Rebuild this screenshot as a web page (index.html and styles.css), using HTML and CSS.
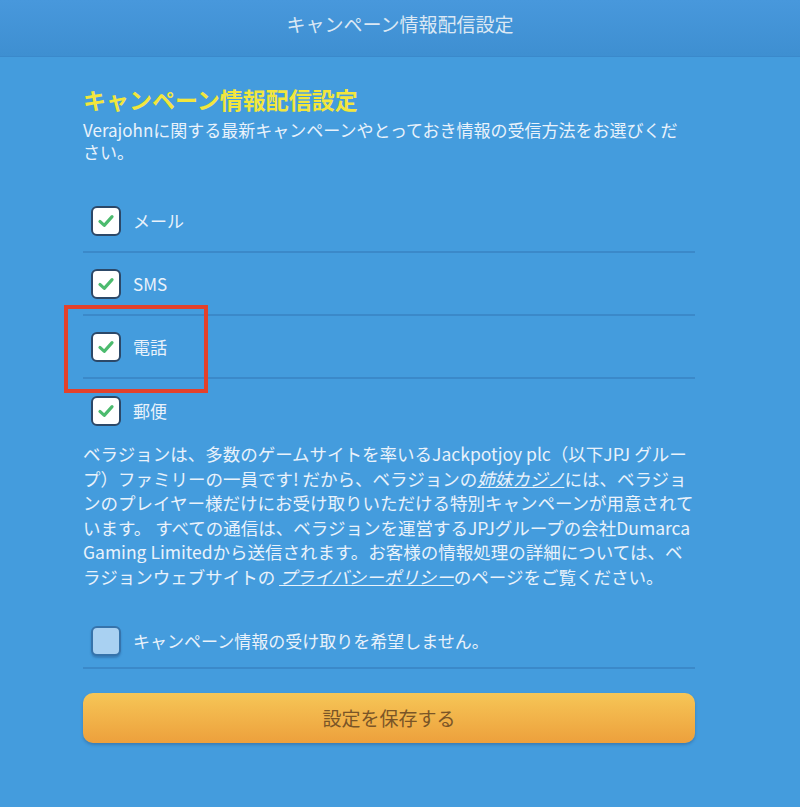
FILE: index.html
```html
<!DOCTYPE html>
<html lang="ja">
<head>
  <meta charset="UTF-8" />
  <meta name="viewport" content="width=device-width, initial-scale=1" />
  <title>キャンペーン情報配信設定</title>
  <link rel="stylesheet" href="styles.css">
</head>
<body>

  <div class="page-header">キャンペーン情報配信設定</div>

  <div class="content">
    <h1 class="title">キャンペーン情報配信設定</h1>
    <p class="lead">Verajohnに関する最新キャンペーンやとっておき情報の受信方法をお選びください。</p>

    <div class="options">
      <label class="option">
        <span class="box checked">
          <svg viewBox="0 0 30 30"><path d="M8 15.5 L13 20 L22 10"/></svg>
        </span>
        <span class="label">メール</span>
      </label>
      <label class="option">
        <span class="box checked">
          <svg viewBox="0 0 30 30"><path d="M8 15.5 L13 20 L22 10"/></svg>
        </span>
        <span class="label">SMS</span>
      </label>
      <label class="option marked">
        <span class="box checked">
          <svg viewBox="0 0 30 30"><path d="M8 15.5 L13 20 L22 10"/></svg>
        </span>
        <span class="label">電話</span>
        <span class="highlight"></span>
      </label>
      <label class="option">
        <span class="box checked">
          <svg viewBox="0 0 30 30"><path d="M8 15.5 L13 20 L22 10"/></svg>
        </span>
        <span class="label">郵便</span>
      </label>
    </div>

    <p class="note">ベラジョンは、多数のゲームサイトを率いるJackpotjoy plc（以下JPJ グループ）ファミリーの一員です! だから、ベラジョンの<a href="#">姉妹カジノ</a>には、ベラジョンのプレイヤー様だけにお受け取りいただける特別キャンペーンが用意されています。 すべての通信は、ベラジョンを運営するJPJグループの会社Dumarca Gaming Limitedから送信されます。お客様の情報処理の詳細については、ベラジョンウェブサイトの <a href="#">プライバシーポリシー</a>のページをご覧ください。</p>

    <label class="option opt-out">
      <span class="box empty"></span>
      <span class="label">キャンペーン情報の受け取りを希望しません。</span>
    </label>

    <button class="save-btn">設定を保存する</button>
  </div>

</body>
</html>
```

FILE: styles.css
```css
body {
  margin: 0;
  background-color: #449cdd;
  font-family: "Noto Sans CJK JP", "Noto Sans", sans-serif;
  color: #e9f2fb;
}

.page-header {
  height: 56px;
  background: linear-gradient(#4898dc, #3e8fd1);
  border-bottom: 1px solid #3a89cb;
  text-align: center;
  line-height: 48px;
  font-size: 19px;
  color: #dbe8f4;
}

.content {
  padding: 27px 105px 40px 83px;
}

.title {
  margin: 0;
  font-size: 23px;
  line-height: 30px;
  font-weight: bold;
  color: #f2e63c;
}

.lead {
  max-width: 600px;
  margin: 5px 0 0;
  font-size: 17px;
  line-height: 22px;
}

.options {
  margin-top: 27px;
}

.option {
  position: relative;
  height: 61px;
  display: flex;
  align-items: center;
  gap: 12px;
  padding-left: 8px;
  border-bottom: 2px solid #3b89c9;
  font-size: 17px;
}

.options .option:last-child {
  border-bottom: none;
  height: 63px;
}

.box {
  width: 26px;
  height: 26px;
  border: 2px solid #2c4868;
  border-radius: 6px;
  display: flex;
  align-items: center;
  justify-content: center;
}

.box.checked {
  background-color: #fff;
}

.box svg {
  width: 26px;
  height: 26px;
  fill: none;
  stroke: #4cbb6e;
  stroke-width: 3.6;
  stroke-linecap: round;
  stroke-linejoin: round;
}

.box.empty {
  background-color: #a9d1f2;
  border-color: #3673ab;
  box-shadow: 0 2px 2px rgba(30, 70, 120, 0.35);
}

/* red frame drawn round the phone option */
.highlight {
  position: absolute;
  left: -19px;
  top: -11px;
  width: 136px;
  height: 80px;
  border: 4px solid #e3412b;
}

.note {
  margin: 0;
  font-size: 17.5px;
  line-height: 24.6px;
}

.note a {
  color: #e9f2fb;
  font-style: italic;
  text-decoration: underline;
}

.opt-out {
  margin-top: 25px;
  height: 52px;
}

.save-btn {
  display: block;
  width: 100%;
  height: 50px;
  margin-top: 24px;
  border: none;
  border-radius: 10px;
  background: linear-gradient(#f6c657, #eda03c);
  box-shadow: 0 2px 3px rgba(40, 70, 110, 0.35);
  font-family: inherit;
  font-size: 19px;
  color: #7a5527;
}
```
